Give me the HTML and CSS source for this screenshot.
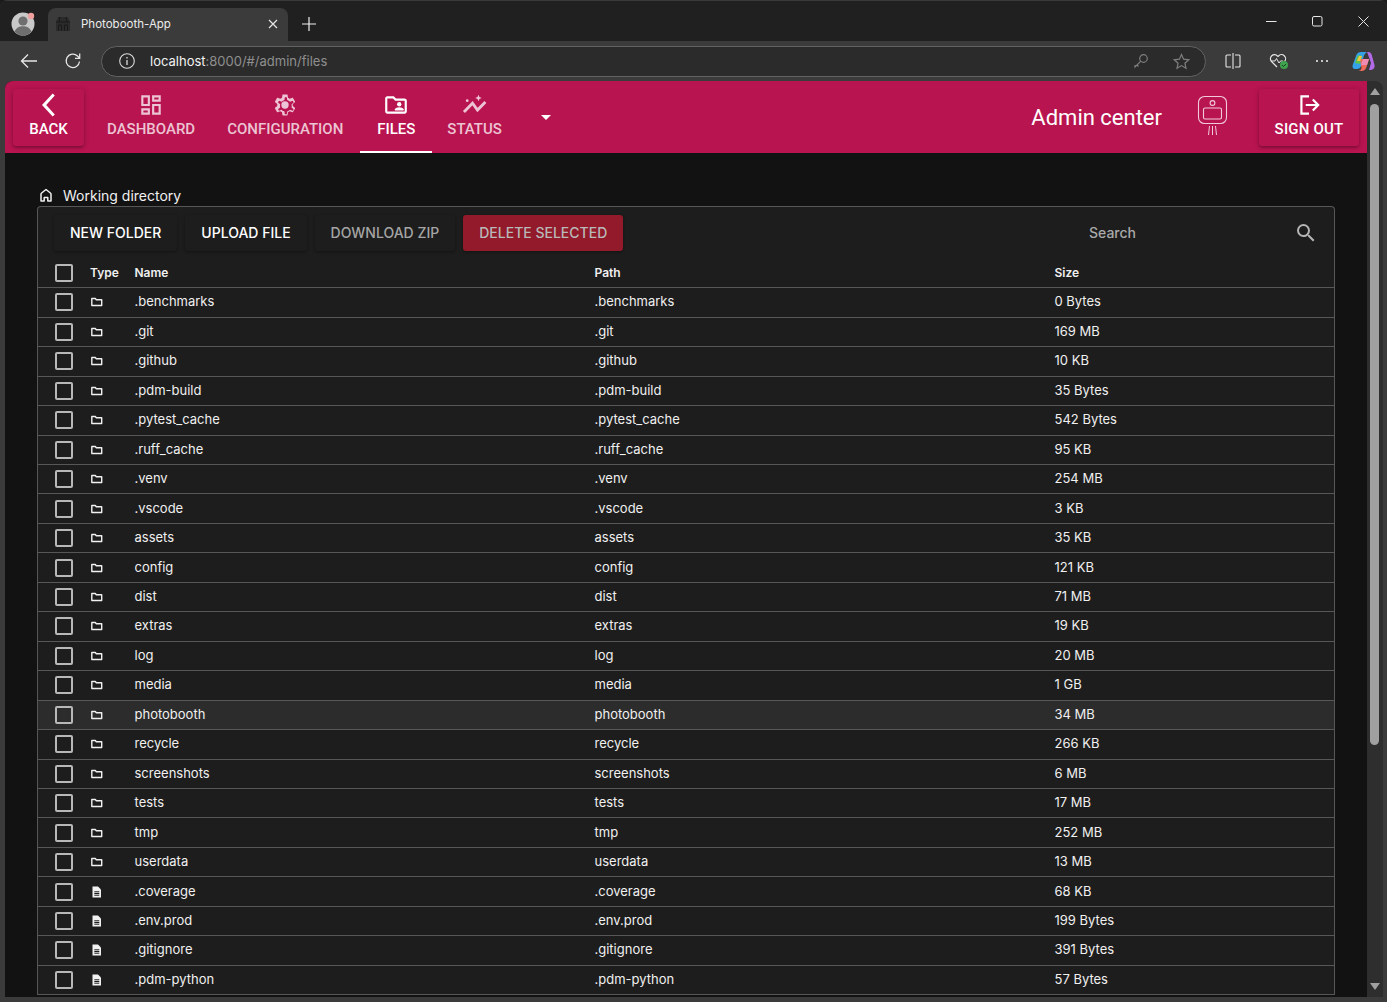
FILE: index.html
```html
<!DOCTYPE html>
<html lang="en">
<head>
    <meta charset="UTF-8">
    <meta name="viewport" content="width=device-width, initial-scale=1.0">
    <title>Photobooth-App</title>
    <link rel="stylesheet" href="styles.css">
</head>
<body>
    <div class="window">
        <!-- browser tab strip -->
        <div class="tabstrip">
            <div class="profile">
                <svg width="26" height="26" viewBox="0 0 26 26"><circle cx="13" cy="13" r="11.5" fill="#c9c9c9"/><circle cx="13" cy="10" r="4.6" fill="#6f6f6f"/><path d="M4.5 20.5c2-4 5-5.2 8.5-5.2s6.500 1.200 8.500 5.200A11.500 11.500 0 0 1 13 24.500a11.500 11.500 0 0 1-8.500-4z" fill="#6f6f6f"/><circle cx="21" cy="5" r="3.2" fill="#f1a0a0"/></svg>
            </div>
            <div class="tab">
                <svg class="tab-icon" width="16" height="16" viewBox="0 0 16 16"><path d="M3 1h10l2 5v9H1V6z" fill="#2b2b2b"/><path d="M1 6h14M3.500 15V9h3v6M9.500 15V9h3v6M5 1 4 6M11 1l1 5" stroke="#1a1a1a" fill="none"/></svg>
                <span class="tab-title">Photobooth-App</span>
                <svg class="tab-close" width="10" height="10" viewBox="0 0 10 10"><path d="M1 1l8 8M9 1 1 9" stroke="#e6e6e6" stroke-width="1.200"/></svg>
            </div>
            <svg class="new-tab" width="14" height="14" viewBox="0 0 14 14"><path d="M7 0v14M0 7h14" stroke="#f0f0f0" stroke-width="1.200"/></svg>
            <div class="window-btns">
                <svg width="11" height="11" viewBox="0 0 11 11"><path d="M0 5.500h10.500" stroke="#e6e6e6"/></svg>
                <svg width="11" height="11" viewBox="0 0 11 11"><rect x=".5" y=".5" width="9.500" height="9.500" rx="1.500" fill="none" stroke="#e6e6e6"/></svg>
                <svg width="11" height="11" viewBox="0 0 11 11"><path d="M.5.500l10 10M10.500.500l-10 10" stroke="#e6e6e6"/></svg>
            </div>
        </div>

        <!-- browser toolbar -->
        <div class="toolbar">
            <svg class="tool-back" width="18" height="16" viewBox="0 0 18 16"><path d="M17 8H1.500M8 1.500 1.500 8 8 14.500" fill="none" stroke="#e6e6e6" stroke-width="1.300"/></svg>
            <svg class="tool-reload" width="18" height="18" viewBox="0 0 18 18"><path d="M15.500 9.500A6.700 6.700 0 1 1 13.500 4L15.500 6" fill="none" stroke="#e6e6e6" stroke-width="1.300"/><path d="M15.700 1.500V6.300H11" fill="none" stroke="#e6e6e6" stroke-width="1.300"/></svg>
            <div class="address">
                <svg width="16" height="16" viewBox="0 0 16 16"><circle cx="8" cy="8" r="7.300" fill="none" stroke="#dcdcdc" stroke-width="1.100"/><path d="M8 7v5M8 4v1.500" stroke="#dcdcdc" stroke-width="1.300"/></svg>
                <span class="url"><span class="url-host">localhost</span>:8000/#/admin/files</span>
                <svg class="addr-key" width="16" height="16" viewBox="0 0 16 16"><circle cx="10.500" cy="5.500" r="3.800" fill="none" stroke="#7e7e7e" stroke-width="1.200"/><path d="M7.800 8.200 2 14v-2M4 12l1.500 1.500" fill="none" stroke="#7e7e7e" stroke-width="1.200"/></svg>
                <svg class="addr-star" width="17" height="17" viewBox="0 0 17 17"><path d="M8.500 1.500l2.100 4.700 5.100.6-3.800 3.400 1.100 5-4.500-2.600L4 15.200l1.100-5L1.300 6.800l5.100-.6z" fill="none" stroke="#7e7e7e" stroke-width="1.200"/></svg>
            </div>
            <svg class="tool-split" width="16" height="16" viewBox="0 0 16 16"><path d="M6 2H2a1 1 0 0 0-1 1v10a1 1 0 0 0 1 1h4M10 2h4a1 1 0 0 1 1 1v10a1 1 0 0 1-1 1h-4M8 0v16" fill="none" stroke="#e6e6e6" stroke-width="1.100"/></svg>
            <svg class="tool-health" width="20" height="18" viewBox="0 0 20 18"><path d="M8 15 2.500 9.500a4 4 0 0 1 6-5.500L9 4.500l.5-.5a4 4 0 0 1 6 5.500" fill="none" stroke="#e6e6e6" stroke-width="1.200"/><path d="M2 9h4l1.500-2.500L10 11l1.500-2H14" fill="none" stroke="#e6e6e6"/><circle cx="15" cy="13" r="4" fill="#3fa34d"/><path d="M13 13l1.500 1.500L17 12" fill="none" stroke="#1d3d22"/></svg>
            <svg class="tool-more" width="14" height="4" viewBox="0 0 14 4"><circle cx="2" cy="2" r="1.100" fill="#e6e6e6"/><circle cx="7" cy="2" r="1.100" fill="#e6e6e6"/><circle cx="12" cy="2" r="1.100" fill="#e6e6e6"/></svg>
            <svg class="tool-copilot" width="23" height="21" viewBox="0 0 23 21"><path d="M9 1h6c-2 1-3 3-3.500 5L9 15c-.5 2-2 3-4 3H3c-2 0-3-2-2.300-4L4 5c.8-2.500 2.500-4 5-4z" fill="#35a2e8"/><path d="M3 12 5 6c.5-1.500 2-2 3.500-1.500L10 5l-2 8z" fill="#5ec24f"/><path d="M15 1h1c2 0 3.300 1.300 3.800 3L22.500 14c.6 2.500-1 5-3.500 5h-2l2-7-2.500-7c-.5-1.800-1-3-1.500-4z" fill="#b26ae6"/><path d="M8 8h9l-2.500 8c-.7 2.500-2.500 4-5 4H6c2 0 3-1 3.500-3z" fill="#ee6a5a"/><path d="M11 8h6l-2 6h-6z" fill="#f08bb4"/><path d="M5 10l2-5h3l-2 5z" fill="#f3c53f"/></svg>
        </div>

        <div class="viewport">
            <div class="page">
                <header class="app-bar">
                    <a class="nav-btn nav-back raised">
                        <svg width="26" height="26" viewBox="0 0 26 26"><path d="M12.800 3.500 10.700 1.400 0 13l10.700 11.600 2.100-2.100L4.200 13z" transform="translate(6 0)" fill="#fff"/></svg>
                        <span>BACK</span>
                    </a>
                    <a class="nav-btn nav-dashboard">
                        <svg width="26" height="26" viewBox="0 0 24 24"><path d="M19 5v2h-4V5h4M9 5v6H5V5h4m10 8v6h-4v-6h4M9 17v2H5v-2h4M21 3h-8v6h8V3zM11 3H3v10h8V3zm10 8h-8v10h8V11zm-10 4H3v6h8v-6z" fill="currentColor"/></svg>
                        <span>DASHBOARD</span>
                    </a>
                    <a class="nav-btn nav-config">
                        <svg width="26" height="26" viewBox="0 0 24 24"><path d="M19.140 12.940c.04-.3.06-.61.06-.94 0-.32-.02-.64-.07-.94l2.030-1.580c.18-.14.23-.41.12-.61l-1.920-3.320c-.12-.22-.37-.29-.59-.22l-2.390.96c-.5-.38-1.030-.7-1.620-.94l-.36-2.540c-.04-.24-.24-.41-.48-.41h-3.840c-.24 0-.43.17-.47.41l-.36 2.540c-.59.24-1.130.57-1.620.94l-2.390-.96c-.22-.08-.47 0-.59.22L2.740 8.870c-.12.21-.08.47.12.61l2.030 1.580c-.05.3-.09.63-.09.94s.02.64.07.94l-2.030 1.580c-.18.14-.23.41-.12.61l1.920 3.320c.12.22.37.29.59.22l2.390-.96c.5.38 1.030.7 1.620.94l.36 2.540c.05.24.24.41.48.41h3.840c.24 0 .44-.17.47-.41l.36-2.540c.59-.24 1.130-.56 1.620-.94l2.390.96c.22.08.47 0 .59-.22l1.920-3.320c.12-.22.07-.47-.12-.61l-2.010-1.580zM18 11.200l.13.85c.03.2.04.43.04.69s-.01.45-.05.68l-.14.85 2 1.560-.9 1.560-2.380-.96-.68.52c-.4.3-.8.53-1.200.7l-.8.32-.35 2.530h-1.800l-.36-2.530-.8-.32c-.43-.18-.82-.4-1.190-.68l-.7-.54-2.360.95-.9-1.560 2-1.560-.14-.85c-.04-.24-.06-.47-.06-.68s.02-.44.06-.68l.14-.85-2-1.560.9-1.560 2.360.95.7-.54c.37-.28.76-.5 1.190-.68l.8-.32.36-2.530h1.800l.36 2.530.8.320c.4.17.8.4 1.200.7l.68.52 2.380-.96.9 1.560z" fill="currentColor" fill-rule="evenodd"/><circle cx="12" cy="12" r="3.400" fill="currentColor"/></svg>
                        <span>CONFIGURATION</span>
                    </a>
                    <a class="nav-btn nav-files active">
                        <svg width="26" height="26" viewBox="0 0 24 24"><path d="M20 6h-8l-2-2H4c-1.100 0-2 .9-2 2v12c0 1.100.9 2 2 2h16c1.100 0 2-.9 2-2V8c0-1.100-.9-2-2-2zm0 12H4V6h5.170l2 2H20v10z" fill="#fff"/><circle cx="15" cy="11.300" r="2" fill="#fff"/><path d="M11 17v-1c0-1.300 2.700-2 4-2s4 .7 4 2v1z" fill="#fff"/></svg>
                        <span>FILES</span>
                    </a>
                    <a class="nav-btn nav-status">
                        <svg width="26" height="26" viewBox="0 0 24 24"><path d="M1.800 18.500 9.700 10.400l4.600 6.200 7.300-7.400" fill="none" stroke="currentColor" stroke-width="2.600"/><circle cx="4.800" cy="8" r="1.300" fill="currentColor"/><path d="M15.200 2.500l.9 2.100 2.100.9-2.100.9-.9 2.100-.9-2.100-2.100-.9 2.100-.9z" fill="currentColor"/></svg>
                        <span>STATUS</span>
                    </a>
                    <i class="nav-caret"></i>
                    <div class="app-title">Admin center</div>
                    <svg class="booth-logo" width="32" height="42" viewBox="0 0 32 42"><rect x="2.500" y="1.500" width="28" height="27" rx="6" fill="none" stroke="#f2c9d9" stroke-width="1.100"/><circle cx="16.500" cy="8" r="2.400" fill="none" stroke="#f2c9d9" stroke-width="1.100"/><rect x="7.500" y="13" width="18" height="11" rx="1.500" fill="none" stroke="#f2c9d9" stroke-width="1.100"/><path d="M13.500 31 12.500 40M16.500 31v9M19.500 31l1 9" fill="none" stroke="#f2c9d9"/></svg>
                    <a class="nav-btn nav-signout raised">
                        <svg width="26" height="26" viewBox="0 0 24 24"><path d="M12 4H5v16h7" fill="none" stroke="#fff" stroke-width="2"/><path d="M9 12h11M15.500 7l5 5-5 5" fill="none" stroke="#fff" stroke-width="2"/></svg>
                        <span>SIGN OUT</span>
                    </a>
                </header>

                <main class="content">
                    <div class="crumb">
                        <svg width="16" height="16" viewBox="0 0 16 16"><path d="M3 14V7.200c0-.5.2-.9.600-1.200L8 2.500 12.400 6c.4.300.6.700.6 1.200V14H9.800v-3.500H6.200V14z" fill="none" stroke="#f0f0f0" stroke-width="1.500" stroke-linejoin="round"/></svg>
                        <span>Working directory</span>
                    </div>
                    <section class="card">
                        <div class="actions">
                            <button class="action">NEW FOLDER</button>
                            <button class="action">UPLOAD FILE</button>
                            <button class="action muted">DOWNLOAD ZIP</button>
                            <button class="action danger">DELETE SELECTED</button>
                            <div class="search">
                                <span>Search</span>
                                <svg width="24" height="24" viewBox="0 0 24 24"><path d="M15.500 14h-.79l-.28-.27A6.470 6.470 0 0 0 16 9.500 6.500 6.500 0 1 0 9.500 16c1.610 0 3.090-.59 4.230-1.570l.27.28v.79l5 4.990L20.490 19l-4.990-5zm-6 0C7.010 14 5 11.990 5 9.500S7.010 5 9.500 5 14 7.010 14 9.500 11.990 14 9.500 14z" fill="#b4b4b4"/></svg>
                            </div>
                        </div>
                        <div class="files">
                            <div class="row head"><i class="check"></i><b>Type</b><b>Name</b><b>Path</b><b>Size</b></div>
                            <div class="row"><i class="check"></i><svg class="ico"><use href="#folder"/></svg><span>.benchmarks</span><span>.benchmarks</span><span>0 Bytes</span></div>
                            <div class="row"><i class="check"></i><svg class="ico"><use href="#folder"/></svg><span>.git</span><span>.git</span><span>169 MB</span></div>
                            <div class="row"><i class="check"></i><svg class="ico"><use href="#folder"/></svg><span>.github</span><span>.github</span><span>10 KB</span></div>
                            <div class="row"><i class="check"></i><svg class="ico"><use href="#folder"/></svg><span>.pdm-build</span><span>.pdm-build</span><span>35 Bytes</span></div>
                            <div class="row"><i class="check"></i><svg class="ico"><use href="#folder"/></svg><span>.pytest_cache</span><span>.pytest_cache</span><span>542 Bytes</span></div>
                            <div class="row"><i class="check"></i><svg class="ico"><use href="#folder"/></svg><span>.ruff_cache</span><span>.ruff_cache</span><span>95 KB</span></div>
                            <div class="row"><i class="check"></i><svg class="ico"><use href="#folder"/></svg><span>.venv</span><span>.venv</span><span>254 MB</span></div>
                            <div class="row"><i class="check"></i><svg class="ico"><use href="#folder"/></svg><span>.vscode</span><span>.vscode</span><span>3 KB</span></div>
                            <div class="row"><i class="check"></i><svg class="ico"><use href="#folder"/></svg><span>assets</span><span>assets</span><span>35 KB</span></div>
                            <div class="row"><i class="check"></i><svg class="ico"><use href="#folder"/></svg><span>config</span><span>config</span><span>121 KB</span></div>
                            <div class="row"><i class="check"></i><svg class="ico"><use href="#folder"/></svg><span>dist</span><span>dist</span><span>71 MB</span></div>
                            <div class="row"><i class="check"></i><svg class="ico"><use href="#folder"/></svg><span>extras</span><span>extras</span><span>19 KB</span></div>
                            <div class="row"><i class="check"></i><svg class="ico"><use href="#folder"/></svg><span>log</span><span>log</span><span>20 MB</span></div>
                            <div class="row"><i class="check"></i><svg class="ico"><use href="#folder"/></svg><span>media</span><span>media</span><span>1 GB</span></div>
                            <div class="row hover"><i class="check"></i><svg class="ico"><use href="#folder"/></svg><span>photobooth</span><span>photobooth</span><span>34 MB</span></div>
                            <div class="row"><i class="check"></i><svg class="ico"><use href="#folder"/></svg><span>recycle</span><span>recycle</span><span>266 KB</span></div>
                            <div class="row"><i class="check"></i><svg class="ico"><use href="#folder"/></svg><span>screenshots</span><span>screenshots</span><span>6 MB</span></div>
                            <div class="row"><i class="check"></i><svg class="ico"><use href="#folder"/></svg><span>tests</span><span>tests</span><span>17 MB</span></div>
                            <div class="row"><i class="check"></i><svg class="ico"><use href="#folder"/></svg><span>tmp</span><span>tmp</span><span>252 MB</span></div>
                            <div class="row"><i class="check"></i><svg class="ico"><use href="#folder"/></svg><span>userdata</span><span>userdata</span><span>13 MB</span></div>
                            <div class="row"><i class="check"></i><svg class="ico"><use href="#file"/></svg><span>.coverage</span><span>.coverage</span><span>68 KB</span></div>
                            <div class="row"><i class="check"></i><svg class="ico"><use href="#file"/></svg><span>.env.prod</span><span>.env.prod</span><span>199 Bytes</span></div>
                            <div class="row"><i class="check"></i><svg class="ico"><use href="#file"/></svg><span>.gitignore</span><span>.gitignore</span><span>391 Bytes</span></div>
                            <div class="row"><i class="check"></i><svg class="ico"><use href="#file"/></svg><span>.pdm-python</span><span>.pdm-python</span><span>57 Bytes</span></div>
                        </div>
                    </section>
                </main>
            </div>
            <div class="scrollbar">
                <i class="arrow-up"></i>
                <div class="thumb"></div>
                <i class="arrow-down"></i>
            </div>
        </div>
    </div>

    <!-- shared row icons -->
    <svg class="sprites" width="0" height="0">
        <symbol id="folder" viewBox="0 0 12 12"><path d="M.8 2.500h3.500l1 1.200h5.400v5.800H.8z" fill="none" stroke="#f1f1f1" stroke-width="1.400" stroke-linejoin="round"/></symbol>
        <symbol id="file" viewBox="0 0 12 12"><path d="M1.500.5h5.500l3 3V11.500H1.500z" fill="#f1f1f1"/><path d="M3.300 5.800h5M3.300 7.500h5M3.300 9.200h5" stroke="#1d1d1d"/></symbol>
    </svg>
</body>
</html>
```

FILE: styles.css
```css
* {
    margin: 0;
    padding: 0;
    box-sizing: border-box;
}

html, body {
    height: 100%;
    overflow: hidden;
}

body {
    background: #1b1b1b;
    font-family: "Roboto", Arial, sans-serif;
}

.sprites {
    display: none;
}

.window {
    height: 1002px;
    display: flex;
    flex-direction: column;
    background: #3b3b3b;
    border-radius: 8px 8px 0 0;
    overflow: hidden;
}

/* tab strip */
.tabstrip {
    height: 41px;
    flex: none;
    display: flex;
    align-items: flex-end;
    background: #202020;
    border-top: 1px solid #3a3a3a;
}

.profile {
    width: 48px;
    height: 40px;
    padding: 10px 0 0 10px;
}

.tab {
    width: 240px;
    height: 33px;
    display: flex;
    align-items: center;
    background: #3b3b3b;
    border-radius: 8px 8px 0 0;
    padding: 0 10px 2px 7px;
}

.tab-icon {
    margin-right: 10px;
}

.tab-title {
    flex: 1;
    color: #ececec;
    font-family: "Inter", sans-serif;
    font-size: 11.5px;
}

.new-tab {
    margin: 0 0 10px 14px;
}

.window-btns {
    margin-left: auto;
    display: flex;
    gap: 35px;
    padding: 0 18px 14px 0;
}

/* toolbar */
.toolbar {
    height: 40px;
    flex: none;
    display: flex;
    align-items: center;
    background: #3b3b3b;
    padding-left: 20px;
}

.tool-reload {
    margin-left: 26px;
}

.address {
    width: 1105px;
    height: 31px;
    margin-left: 19px;
    display: flex;
    align-items: center;
    background: #2b2b2b;
    border: 1px solid #626262;
    border-radius: 16px;
    padding: 0 15px 0 17px;
}

.url {
    margin-left: 15px;
    flex: 1;
    color: #8f8f8f;
    font-family: "Inter", sans-serif;
    font-size: 13px;
}

.url-host {
    color: #f2f2f2;
}

.addr-star {
    margin-left: 24px;
}

.tool-split {
    margin-left: 19px;
}

.tool-health {
    margin-left: 28px;
}

.tool-more {
    margin-left: 26px;
}

.tool-copilot {
    margin-left: 23px;
}

/* page area */
.viewport {
    flex: 1;
    min-height: 0;
    display: flex;
    padding: 0 4px 5px 5px;
}

.page {
    flex: 1;
    min-width: 0;
    background: #121212;
    border-radius: 8px 0 0 0;
    overflow: hidden;
}

.scrollbar {
    width: 16px;
    flex: none;
    position: relative;
    background: #2e2e2e;
    border-radius: 0 8px 0 0;
}

.thumb {
    position: absolute;
    top: 23px;
    left: 3px;
    width: 9px;
    height: 641px;
    background: #a0a0a0;
    border-radius: 5px;
}

.arrow-up, .arrow-down {
    position: absolute;
    left: 3px;
    width: 0;
    height: 0;
    border-left: 5px solid transparent;
    border-right: 5px solid transparent;
}

.arrow-up {
    top: 7px;
    border-bottom: 7px solid #a0a0a0;
}

.arrow-down {
    bottom: 7px;
    border-top: 7px solid #a0a0a0;
}

/* app header */
.app-bar {
    height: 72px;
    display: flex;
    align-items: center;
    background: #b8144f;
    padding: 0 8px;
}

.nav-btn {
    height: 100%;
    display: flex;
    flex-direction: column;
    align-items: center;
    gap: 1px;
    padding: 11px 16px 0;
    color: rgba(255, 255, 255, 0.75);
    font-size: 15px;
    font-weight: 500;
    position: relative;
}

.nav-btn span {
    line-height: 20px;
}

.nav-btn.raised {
    height: 57px;
    padding-top: 3px;
    color: #fff;
    border-radius: 3px;
    box-shadow: 0 1px 5px rgba(0, 0, 0, 0.25), 0 2px 2px rgba(0, 0, 0, 0.14);
}

.nav-back {
    width: 71px;
}

.nav-dashboard {
    margin-left: 7px;
}

.nav-files {
    width: 72px;
    margin-left: 1px;
}

.nav-status {
    margin-left: -1px;
}

.nav-btn.active {
    color: #fff;
}

.nav-btn.active::after {
    content: "";
    position: absolute;
    left: 0;
    right: 0;
    bottom: 0;
    height: 2px;
    background: #fff;
}

.nav-caret {
    width: 0;
    height: 0;
    margin-left: 23px;
    border-left: 5px solid transparent;
    border-right: 5px solid transparent;
    border-top: 5px solid #fff;
}

.app-title {
    margin-left: auto;
    color: #fff;
    font-size: 22px;
}

.booth-logo {
    margin: 0 31px 3px 34px;
}

.nav-signout {
    width: 100px;
    white-space: nowrap;
    letter-spacing: 0.2px;
}

/* file browser */
.content {
    padding: 33px 32px 0;
    font-family: "Inter", sans-serif;
}

.crumb {
    height: 20px;
    display: flex;
    align-items: center;
    gap: 9px;
    color: #f0f0f0;
    font-size: 14px;
    margin-left: 1px;
    padding-bottom: 2px;
}

.card {
    background: #1d1d1d;
    border: 1px solid #575757;
    border-bottom: none;
    border-radius: 4px 4px 0 0;
    width: 1298px;
}

.actions {
    height: 52px;
    display: flex;
    align-items: center;
    gap: 8px;
    padding: 0 15px 0 16px;
}

.action {
    height: 36px;
    padding: 0 16px 2px;
    background: #1d1d1d;
    border: none;
    border-radius: 3px;
    color: #fff;
    font-family: "Inter", sans-serif;
    font-size: 14px;
    font-weight: 500;
    box-shadow: 0 1px 3px rgba(0, 0, 0, 0.35);
}

.action.muted {
    color: #a5a5a5;
}

.action.danger {
    background: #921a2a;
    color: #b9b9b9;
}

.search {
    margin-left: auto;
    width: 230px;
    display: flex;
    align-items: center;
    justify-content: space-between;
    padding-right: 1px;
    color: #a9a9a9;
    font-size: 14px;
    font-weight: 500;
}

.search span {
    padding-bottom: 2px;
}

.row {
    height: 29.46px;
    display: grid;
    grid-template-columns: 52px 44.5px 460px 460px 1fr;
    align-items: center;
    border-bottom: 1px solid #575757;
    color: #f0f0f0;
    font-size: 13px;
}

.row span, .row b {
    padding-bottom: 2px;
}

.row.head {
    font-size: 12px;
    height: 29.25px;
}

.row.head b {
    font-weight: 600;
}

.row.hover {
    background: #2c2c2c;
}

.check {
    width: 18px;
    height: 18px;
    margin-left: 17px;
    border: 2px solid #b8b8b8;
    border-radius: 2px;
}

.ico {
    width: 12px;
    height: 12px;
    margin-left: 1px;
    display: block;
}
```
